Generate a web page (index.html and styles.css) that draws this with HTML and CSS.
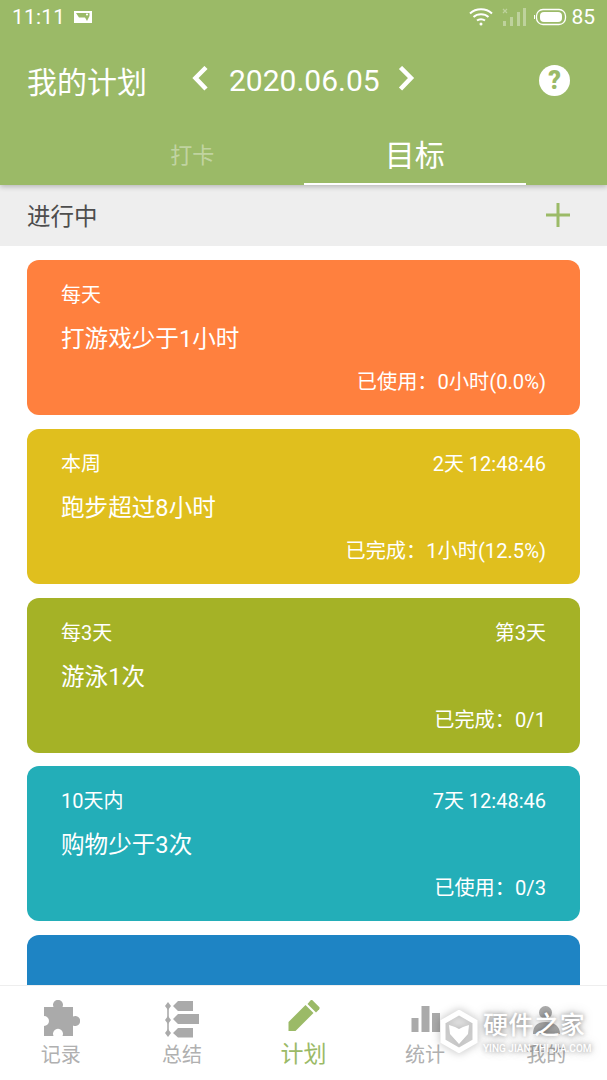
FILE: index.html
```html
<!DOCTYPE html>
<html>
<head>
	<meta charset="UTF-8" />
	<title>我的计划</title>
	<link rel="stylesheet" href="styles.css">
</head>
<body>
<div class="app">
	<!--green header-->
	<header class="head">
		<div class="status">
			<div class="status-left">
				<span class="clock">11:11</span>
				<svg class="pic" width="18" height="14" viewBox="0 0 18 14"><path fill="#fff" d="M0 1h18v12H0z"/><path fill="#9bba67" d="M2 3h13.500v3l-2.500 5-2-3.500H5z"/><circle cx="13" cy="4.500" r="1.100" fill="#fff"/></svg>
			</div>
			<div class="status-right">
				<svg width="24" height="19" viewBox="0 0 24 19" fill="none" stroke="#fff" stroke-width="2"><path d="M1 6.500c6-5.600 16-5.600 22 0"/><path d="M4.500 10c4-3.600 11-3.600 15 0"/><path d="M8 13.500c2.200-1.800 5.800-1.800 8 0"/><circle cx="12" cy="17" r="1.500" fill="#fff" stroke="none"/></svg>
				<svg class="signal" width="25" height="20" viewBox="0 0 25 20" fill="#fff" opacity=".35"><path d="M1 14h3v5H1zM8 10h3v9H8zM15 5h3v14h-3zM21 1h3v18h-3z"/><path d="M1 2l4 4M5 2L1 6" stroke="#fff" stroke-width="1.200"/></svg>
				<svg class="cell" width="33" height="18" viewBox="0 0 33 18"><rect x="2.500" y="1.500" width="29" height="15" rx="6.500" fill="none" stroke="#fff" stroke-width="1.300"/><rect x="6" y="4" width="22" height="10" rx="4" fill="#fff"/><path d="M0 7h1v4H0z" fill="#fff"/></svg>
				<span class="batt">85</span>
			</div>
		</div>
		<div class="titlebar">
			<span class="title">我的计划</span>
			<div class="datepick">
				<svg width="20" height="28" viewBox="0 0 20 28" fill="none" stroke="#fff" stroke-width="4.500"><path d="M15 1.500L4.500 12 15 23"/></svg>
				<span class="date">2020.06.05</span>
				<svg width="20" height="28" viewBox="0 0 20 28" fill="none" stroke="#fff" stroke-width="4.500"><path d="M3.500 1.500L14 12 3.500 23"/></svg>
			</div>
			<span class="help">?</span>
		</div>
		<div class="tabs">
			<div class="tab">打卡</div>
			<div class="tab on">目标</div>
		</div>
	</header>

	<div class="subhead">
		<span>进行中</span>
		<svg width="26" height="26" viewBox="0 0 26 26" fill="#9bba67"><path d="M11.500 1h3v24h-3z"/><path d="M1 11.500h24v3H1z"/></svg>
	</div>

	<!--goals-->
	<div class="list">
		<div class="card orange">
			<div class="row"><span>每天</span></div>
			<div class="name">打游戏少于1小时</div>
			<div class="foot">已使用：0小时(0.0%)</div>
		</div>
		<div class="card yellow">
			<div class="row"><span>本周</span><span>2天 12:48:46</span></div>
			<div class="name">跑步超过8小时</div>
			<div class="foot">已完成：1小时(12.5%)</div>
		</div>
		<div class="card olive">
			<div class="row"><span>每3天</span><span>第3天</span></div>
			<div class="name">游泳1次</div>
			<div class="foot">已完成：0/1</div>
		</div>
		<div class="card teal">
			<div class="row"><span>10天内</span><span>7天 12:48:46</span></div>
			<div class="name">购物少于3次</div>
			<div class="foot">已使用：0/3</div>
		</div>
		<div class="card blue"></div>
	</div>

	<!--bottom nav-->
	<nav class="nav">
		<div class="item">
			<svg width="38" height="38" viewBox="0 0 38 38" fill="#aaa"><path d="M2 7h9.500a5 5 0 1 1 9 0H31v9.500a5 5 0 1 1 0 9V36H20.500a5 5 0 1 0-9 0H2V26a5 5 0 1 0 0-10z"/></svg>
			<span>记录</span>
		</div>
		<div class="item">
			<svg width="38" height="38" viewBox="0 0 38 38" fill="#aaa"><path d="M4.200 5h1.600v29H4.200z"/><path d="M5 2l3 4-3 4-3-4zM5 16l3 4-3 4-3-4zM5 29l3 4-3 4-3-4z"/><path d="M10 6l5-5h15v10H15zM10 19l5-5h21v10H15zM10 33l5-5h15v9.500H15z"/></svg>
			<span>总结</span>
		</div>
		<div class="item on">
			<svg width="38" height="38" viewBox="0 0 38 38" fill="#9bba67"><path d="M3.500 31v-9l17-17 8 8-18 18z"/><path d="M22.500 4l3-3.500c.8-.6 1.500-.6 2.200 0l6.500 6.500c.6.700.6 1.500 0 2.200L31 12.500z"/></svg>
			<span>计划</span>
		</div>
		<div class="item">
			<svg width="38" height="38" viewBox="0 0 38 38" fill="#aaa"><path d="M5.500 18h7v14h-7zM15.500 6h8v26h-8zM26 13h8v19h-8z"/></svg>
			<span>统计</span>
		</div>
		<div class="item">
			<svg width="38" height="38" viewBox="0 0 38 38" fill="#aaa"><circle cx="18.500" cy="12.500" r="6.500"/><path d="M6 34c0-8 4-12 12.500-12S33 26 33 34z"/></svg>
			<span>我的</span>
		</div>
	</nav>

	<!--watermark sits over the nav-->
	<div class="mark">
		<svg class="mark-logo" width="38" height="43" viewBox="0 0 38 43"><path d="M19 2.500l16 9.250v19.500L19 40.500 3 31.250v-19.500z" fill="rgba(0,0,0,.06)" stroke="#fff" stroke-width="5"/><path d="M9 15l6 2 4 2 4-2 6-2-1 9-9 10-9-10z" fill="#fff"/></svg>
		<div class="mark-text">
			<div class="mark-cn">硬件之家</div>
			<div class="mark-en">YING JIAN ZHI JIA.COM</div>
		</div>
	</div>
</div>
</body>
</html>
```

FILE: styles.css
```css
* {
	box-sizing: border-box;
}
html, body {
	margin: 0;
	padding: 0;
	background: #fff;
}
body {
	font-family: Roboto, "Noto Sans CJK SC", sans-serif;
}
.app {
	position: relative;
	width: 607px;
	height: 1080px;
	overflow: hidden;
	display: flex;
	flex-direction: column;
}
.head {
	height: 185px;
	flex: none;
	background: #9bba67;
	color: #fff;
	box-shadow: 0 2px 5px rgba(0,0,0,.22);
	position: relative;
	z-index: 1;
}
.status {
	height: 33px;
	padding: 0 12px;
	display: flex;
	justify-content: space-between;
	align-items: center;
}
.status-left, .status-right {
	display: flex;
	align-items: center;
}
.clock {
	font-size: 21px;
	letter-spacing: .2px;
}
.pic {
	margin-left: 9px;
}
.signal {
	margin-left: 9px;
}
.cell {
	margin-left: 7px;
}
.batt {
	font-size: 21px;
	margin-left: 4px;
}
.titlebar {
	height: 94px;
	padding: 0 37px 0 27px;
	display: flex;
	align-items: center;
}
.title {
	font-size: 30px;
	width: 164px;
	flex: none;
}
.datepick {
	display: flex;
	align-items: center;
	flex: 1;
}
.date {
	font-size: 30px;
	margin: 0 17px 0 18px;
}
.help {
	width: 31px;
	height: 31px;
	border-radius: 50%;
	background: #fff;
	color: #9bba67;
	font-size: 25px;
	font-weight: 900;
	line-height: 31px;
	text-align: center;
}
.tabs {
	height: 58px;
	display: flex;
	padding: 0 81px 0 81px;
}
.tab {
	flex: 1;
	text-align: center;
	font-size: 22px;
	line-height: 58px;
	color: rgba(255,255,255,.4);
	border-bottom: 2px solid transparent;
}
.tab.on {
	font-size: 30px;
	color: #fff;
	border-bottom-color: #fff;
}
.subhead {
	height: 61px;
	flex: none;
	background: #eee;
	padding: 0 36px 2px 27px;
	display: flex;
	justify-content: space-between;
	align-items: center;
	font-size: 23.500px;
	color: #4d4d4d;
}
.list {
	flex: 1;
	min-height: 0;
	overflow: hidden;
	padding: 14px 27px 0;
	display: flex;
	flex-direction: column;
	gap: 13.750px;
}
.card {
	height: 155px;
	flex: none;
	border-radius: 12px;
	color: #fff;
	padding: 22px 34px 0;
}
.row {
	display: flex;
	justify-content: space-between;
	font-size: 20px;
	line-height: 26px;
}
.name {
	font-size: 23.600px;
	line-height: 32px;
	margin-top: 15px;
}
.foot {
	font-size: 20.200px;
	line-height: 26px;
	text-align: right;
	margin-top: 14px;
}
.orange { background: #ff803e; }
.yellow { background: #e0bf1e; }
.olive { background: #a5b226; }
.teal { background: #23aeb8; }
.blue { background: #1e84c4; }
.nav {
	height: 95px;
	flex: none;
	background: #fff;
	border-top: 1px solid #eee;
	display: flex;
	position: relative;
}
.item {
	flex: 1;
	display: flex;
	flex-direction: column;
	align-items: center;
	padding-top: 14px;
	font-size: 20px;
	line-height: 26px;
	color: #b0b0b0;
}
.item span {
	margin-top: 4px;
}
.item.on {
	color: #9bba67;
	font-size: 23px;
}
.mark {
	position: absolute;
	left: 440px;
	top: 1010px;
	display: flex;
	gap: 5px;
	color: #fff;
	text-shadow: 0 0 5px rgba(0,0,0,.4), 0 0 12px rgba(0,0,0,.25);
}
.mark-logo {
	filter: drop-shadow(0 0 4px rgba(0,0,0,.3));
}
.mark-text {
	padding-top: 2px;
}
.mark-cn {
	font-size: 25px;
	font-weight: 500;
	line-height: 28px;
	letter-spacing: .6px;
	white-space: nowrap;
}
.mark-en {
	font-size: 10px;
	font-weight: 500;
	line-height: 12px;
	margin-top: 3px;
	white-space: nowrap;
}
```
